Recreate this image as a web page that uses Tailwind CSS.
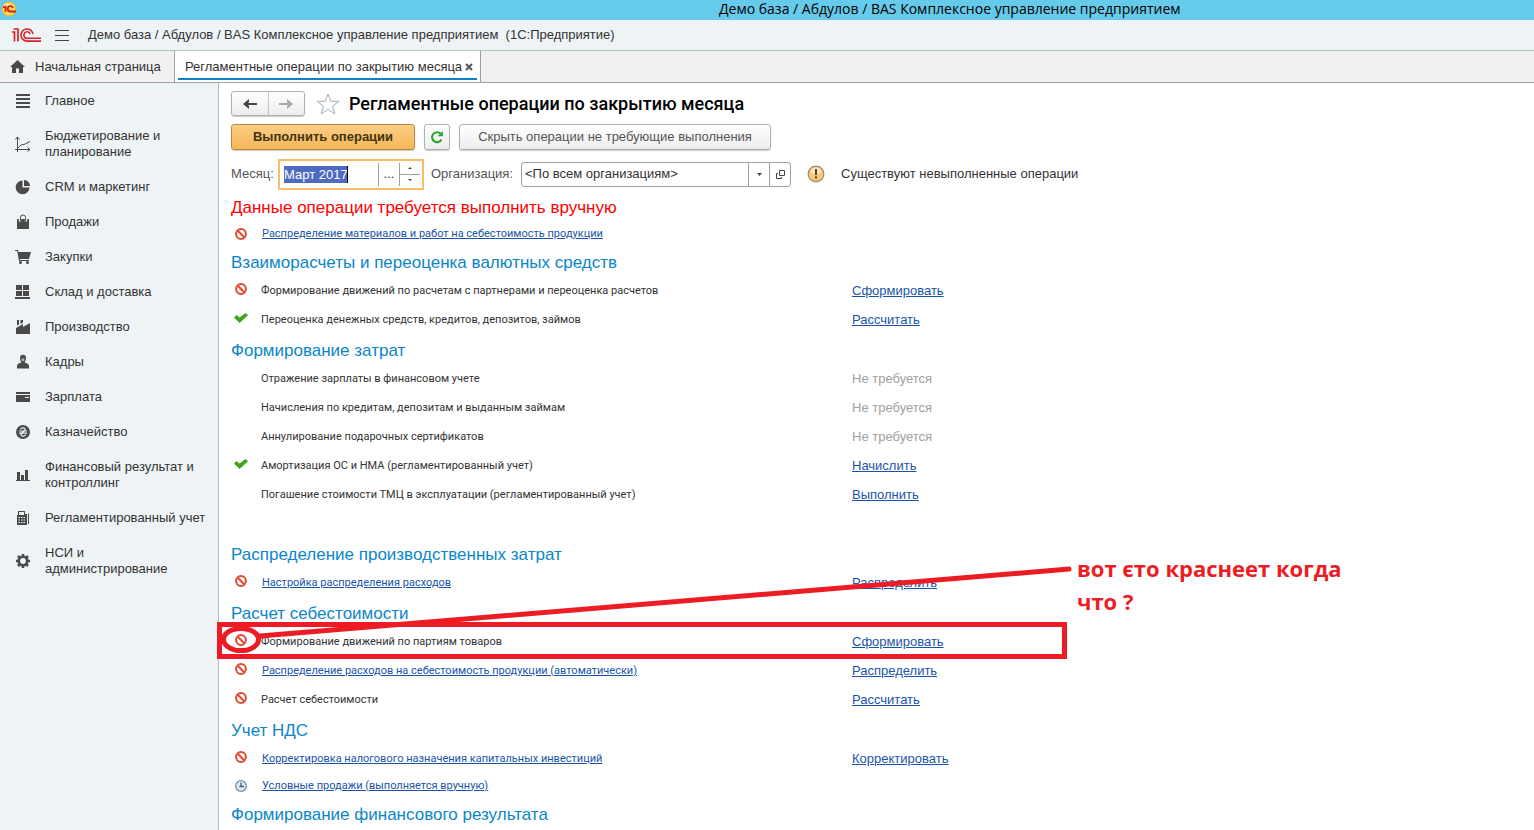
<!DOCTYPE html>
<html lang="ru">
<head>
    <meta charset="UTF-8">
    <meta name="viewport" content="width=device-width, initial-scale=1.0">
    <title>Регламентные операции по закрытию месяца</title>
    <script src="https://cdn.jsdelivr.net/npm/@tailwindcss/browser@4"></script>
</head>
<body class="relative flex min-h-screen flex-col overflow-x-hidden bg-white font-['Liberation_Sans',sans-serif] text-[13px] leading-4 text-[#333]">

    <!-- Иконки статусов -->
    <svg class="hidden">
        <symbol id="stop" viewBox="0 0 12 12">
            <circle cx="6" cy="6" r="4.9" fill="#fff" stroke="#e0492f" stroke-width="2"/>
            <path d="M2.8 2.8l6.4 6.4" stroke="#e0492f" stroke-width="2"/>
        </symbol>
        <symbol id="done" viewBox="0 0 14 12">
            <path d="M0 5.500l2.500-2.500L5.500 5.500 11.500 1 14 3.200 5.600 11z" fill="#3fa31c"/>
        </symbol>
        <symbol id="clock" viewBox="0 0 12 12">
            <circle cx="6" cy="6" r="5.300" fill="#dfe9f1" stroke="#6f8fae" stroke-width="1.300"/>
            <path d="M6 2.500V6.500H9M6 6.500H4.500" fill="none" stroke="#4b5a68" stroke-width="1.300"/>
        </symbol>
    </svg>

    <!-- Заголовок окна -->
    <div class="flex h-5 items-center bg-[#66caea] pb-[2px] text-black">
        <svg class="ml-[1px] size-4 shrink-0" viewBox="0 0 16 16">
            <circle cx="8" cy="8" r="7" fill="#fbd94d" stroke="#d8a92c" stroke-width=".8"/>
            <ellipse cx="6.500" cy="5" rx="4" ry="2.500" fill="#fff2b0"/>
            <path d="M2 6.500L4.500 5.500V11M15 10.500H9.500A2.700 2.700 0 1 1 12 7" fill="none" stroke="#dc1c10" stroke-width="1.800"/>
        </svg>
        <div class="pl-[702px] font-['Open_Sans',sans-serif] text-[14px] whitespace-nowrap">Демо база / Абдулов / BAS Комплексное управление предприятием</div>
    </div>

    <header class="flex h-[31px] items-center border-b border-[#b9bfc2] bg-[#eef3f6]">
        <svg class="ml-3 h-[14px] w-[29px] shrink-0" viewBox="0 0 29 14" fill="none" stroke="#d8232a">
            <path d="M0 4H2.500V13.500M1.500 1H6V13.500" stroke-width="1.700"/>
            <path d="M29 13.100H15A6.050 6.050 0 1 1 21 6" stroke-width="1.600"/>
            <path d="M29 10.300H15A3.250 3.250 0 1 1 18.200 6" stroke-width="1.500"/>
        </svg>
        <button type="button" aria-label="Меню" class="ml-[14px]">
            <svg class="h-3 w-[14px]" viewBox="0 0 14 12" stroke="#444"><path d="M0 1.500H14M0 6.500H14M0 11.500H14"/></svg>
        </button>
        <span class="ml-[19px] whitespace-pre">Демо база / Абдулов / BAS Комплексное управление предприятием  (1С:Предприятие)</span>
    </header>

    <div class="flex h-8 border-b border-[#a0a0a0] bg-[#f1f1f1]">
        <a href="#" class="flex w-[174px] items-center pl-[10px]">
            <svg class="h-[13px] w-[15px]" viewBox="0 0 15 13" fill="#4a4a4a"><path d="M7.500 0L15 7H13V13H9V8.500H6V13H2V7H0z"/></svg>
            <span class="ml-[10px]">Начальная страница</span>
        </a>
        <div class="flex w-[307px] border-x border-[#a0a0a0] bg-white px-[3px] pb-[2px]">
            <div class="flex flex-1 items-center justify-between border-b-2 border-[#0b82c5] pt-1 pr-1 pl-[7px]">
                <span class="whitespace-nowrap">Регламентные операции по закрытию месяца</span>
                <button type="button" aria-label="Закрыть">
                    <svg class="size-2" viewBox="0 0 8 8" stroke="#555" stroke-width="2"><path d="M1 1l6 6M7 1L1 7"/></svg>
                </button>
            </div>
        </div>
    </div>

    <div class="flex flex-1">
        <!-- Панель разделов -->
        <nav class="w-[219px] shrink-0 border-r border-[#b5bbbe] bg-[#eef3f6] pt-px">
            <a href="#" class="flex items-center gap-[14px] pt-[9px] pr-2 pb-[10px] pl-[15px]">
                <svg class="size-4 shrink-0" viewBox="0 0 16 16" fill="#4a4a4a"><path d="M1 1h14v2H1zM1 5h14v2H1zM1 9h14v2H1zM1 13h14v2H1z"/></svg>
                Главное
            </a>
            <a href="#" class="flex items-center gap-[14px] pt-[9px] pr-2 pb-[10px] pl-[15px]">
                <svg class="size-4 shrink-0" viewBox="0 0 16 16" fill="none" stroke="#4a4a4a"><path d="M2.500 16V1M0 13.500H15M.5 3.500L2.500 1l2 2.500M12.500 11.500l2.500 2-2.500 2M3 12l3-3 3-.5 6-3"/></svg>
                Бюджетирование и<br>планирование
            </a>
            <a href="#" class="flex items-center gap-[14px] pt-[9px] pr-2 pb-[10px] pl-[15px]">
                <svg class="size-4 shrink-0" viewBox="0 0 16 16" fill="#4a4a4a"><path d="M7.500 1.500V8.500H14.500A6.900 6.900 0 1 1 7.500 1.500z"/><path d="M9 1A6 6 0 0 1 15 7H9z"/></svg>
                CRM и маркетинг
            </a>
            <a href="#" class="flex items-center gap-[14px] pt-[9px] pr-2 pb-[10px] pl-[15px]">
                <svg class="size-4 shrink-0" viewBox="0 0 16 16" fill="#4a4a4a"><path d="M2 5H14V15H2z"/><path d="M5 7.500V3.500a3 3 0 0 1 6 0V7.500" fill="none" stroke="#eef3f6" stroke-width="2.400"/><path d="M5.500 7V3.500a2.500 2.500 0 0 1 5 0V7" fill="none" stroke="#4a4a4a" stroke-width="1"/></svg>
                Продажи
            </a>
            <a href="#" class="flex items-center gap-[14px] pt-[9px] pr-2 pb-[10px] pl-[15px]">
                <svg class="size-4 shrink-0" viewBox="0 0 16 16" fill="#4a4a4a"><path d="M0 1H3L3.500 3H16L14 10H5V11H14V12H4L2.200 2H0z"/><circle cx="5.500" cy="13.500" r="1.500"/><circle cx="12.500" cy="13.500" r="1.500"/></svg>
                Закупки
            </a>
            <a href="#" class="flex items-center gap-[14px] pt-[9px] pr-2 pb-[10px] pl-[15px]">
                <svg class="size-4 shrink-0" viewBox="0 0 16 16" fill="#4a4a4a"><path d="M1 1H7V6H1zM8 1H14V6H8zM1 7H7V12H1zM8 7H14V12H8zM0 13H15V15H0z"/></svg>
                Склад и доставка
            </a>
            <a href="#" class="flex items-center gap-[14px] pt-[9px] pr-2 pb-[10px] pl-[15px]">
                <svg class="size-4 shrink-0" viewBox="0 0 16 16" fill="#4a4a4a"><path d="M1 15V9L8 5V8L15 4V15zM2 1H4V5.500L2 6.500zM5.500 1H8V3.500L5.500 5z"/></svg>
                Производство
            </a>
            <a href="#" class="flex items-center gap-[14px] pt-[9px] pr-2 pb-[10px] pl-[15px]">
                <svg class="size-4 shrink-0" viewBox="0 0 16 16" fill="#4a4a4a"><path d="M5 4a3 3.300 0 0 1 6 0c0 2-1 4-1.500 4.500C12 9 14 10 14 12V14.500H2V12C2 10 4 9 6.500 8.500 6 8 5 6 5 4z"/><path d="M6.500 4.500H9.500L9 7H7z" fill="#b9bdc0"/></svg>
                Кадры
            </a>
            <a href="#" class="flex items-center gap-[14px] pt-[9px] pr-2 pb-[10px] pl-[15px]">
                <svg class="size-4 shrink-0" viewBox="0 0 16 16" fill="#4a4a4a"><path d="M1 3H15V5H1zM1 6H15V13H1z"/><path d="M10 8H14V9H10z" fill="#eef3f6"/></svg>
                Зарплата
            </a>
            <a href="#" class="flex items-center gap-[14px] pt-[9px] pr-2 pb-[10px] pl-[15px]">
                <svg class="size-4 shrink-0" viewBox="0 0 16 16"><circle cx="8" cy="8" r="7" fill="#4a4a4a"/><path d="M5.500 5.200C6.500 3 10.500 3.500 10 5.800 9.500 8 6 8 6 10.200 6 12.500 9.500 12.800 10.700 10.800M4 7H12M4 9.200H12" fill="none" stroke="#eef3f6" stroke-width="1.200"/></svg>
                Казначейство
            </a>
            <a href="#" class="flex items-center gap-[14px] pt-[9px] pr-2 pb-[10px] pl-[15px]">
                <svg class="size-4 shrink-0" viewBox="0 0 16 16" fill="#4a4a4a"><path d="M1 13H15V14H1zM2 5H5V13H2zM6 8H9V13H6zM10 3H13V13H10z"/></svg>
                Финансовый результат и<br>контроллинг
            </a>
            <a href="#" class="flex items-center gap-[14px] pt-[9px] pr-2 pb-[10px] pl-[15px]">
                <svg class="size-4 shrink-0" viewBox="0 0 16 16" fill="#4a4a4a"><path d="M3 1H10V4H12V15H2V5H3z"/><path d="M13 3.500H14V14H13z"/><path d="M4 2H9V5H4z" fill="#eef3f6"/><path d="M3.500 7.500H11M3.500 10H11M3.500 12.500H11" stroke="#eef3f6" stroke-dasharray="1.500 1"/></svg>
                Регламентированный учет
            </a>
            <a href="#" class="flex items-center gap-[14px] pt-[9px] pr-2 pb-[10px] pl-[15px]">
                <svg class="size-4 shrink-0" viewBox="0 0 16 16" fill="none" stroke="#4a4a4a"><circle cx="8" cy="8" r="4.200" stroke-width="2.600"/><path d="M8 1V3.500M8 12.500V15M1 8H3.500M12.500 8H15M3 3l1.800 1.800M11.200 11.200L13 13M13 3l-1.800 1.800M4.800 11.200L3 13" stroke-width="2.600"/></svg>
                НСИ и<br>администрирование
            </a>
        </nav>

        <main class="min-w-0 flex-1 pt-2 pl-3">
            <div class="flex h-[25px] items-center">
                <div class="flex h-[25px] w-[74px] rounded-[3px] border border-[#b0b0b0] bg-gradient-to-b from-white to-[#ededed] shadow-[0_1px_1px_#ccc]">
                    <button type="button" aria-label="Назад" class="flex flex-1 items-center justify-center border-r border-[#c4c4c4]">
                        <svg class="h-[10px] w-[14px]" viewBox="0 0 14 10"><path d="M14 5H3" stroke="#444" stroke-width="2"/><path d="M0 5L6 0V3L4 5l2 2v3z" fill="#444"/></svg>
                    </button>
                    <button type="button" aria-label="Вперед" class="flex flex-1 items-center justify-center">
                        <svg class="h-[10px] w-[14px]" viewBox="0 0 14 10"><path d="M0 5H11" stroke="#a8a8a8" stroke-width="2"/><path d="M14 5L8 0V3l2 2-2 2v3z" fill="#a8a8a8"/></svg>
                    </button>
                </div>
                <svg class="ml-[11px] h-[22px] w-6" viewBox="0 0 24 22" fill="#fff" stroke="#a5b0b8"><path d="M12 1l2.800 7.300H23l-6.500 4.900 2.400 7.800L12 16.300 5.100 21l2.400-7.800L1 8.300H9.200z"/></svg>
                <h1 class="ml-[9px] font-['Roboto',sans-serif] text-[18px] font-medium text-black">Регламентные операции по закрытию месяца</h1>
            </div>

            <div class="mt-2 flex h-[26px] gap-[9px]">
                <button type="button" class="h-[26px] w-[184px] rounded-[3px] border border-[#b98a3e] bg-gradient-to-b from-[#fccd85] to-[#f5b758] font-bold text-[#40350f] shadow-[0_1px_1px_#ccc]">Выполнить операции</button>
                <button type="button" aria-label="Обновить" class="flex h-[26px] w-[26px] items-center justify-center rounded-[3px] border border-[#b0b0b0] bg-gradient-to-b from-white to-[#ededed] shadow-[0_1px_1px_#ccc]">
                    <svg class="size-[14px]" viewBox="0 0 14 14"><path d="M11.500 9.500A5 5 0 1 1 10.500 3.500" fill="none" stroke="#29a329" stroke-width="2"/><path d="M12.800 1V6.200H7.600z" fill="#29a329"/></svg>
                </button>
                <button type="button" class="h-[26px] w-[312px] rounded-[3px] border border-[#b0b0b0] bg-gradient-to-b from-white to-[#ededed] text-[#555] shadow-[0_1px_1px_#ccc]">Скрыть операции не требующие выполнения</button>
            </div>

            <div class="mt-2 flex h-8 items-center">
                <label for="month" class="w-[47px] text-[#555]">Месяц:</label>
                <div class="flex h-[31px] w-[146px] items-center border-2 border-[#f9bd68] bg-white">
                    <div class="flex flex-1 items-center pl-1">
                        <input id="month" type="text" value="Март 2017" class="h-[17px] w-[64px] border-r border-black bg-[#4f6bc0] text-white outline-none">
                    </div>
                    <button type="button" aria-label="Выбрать" class="h-[23px] w-[22px] border-x border-[#a0a0a0]">...</button>
                    <div class="mr-[2px] flex h-[23px] w-5 flex-col">
                        <button type="button" aria-label="Больше" class="flex flex-1 items-center justify-center border-b border-[#a0a0a0]"><svg class="h-[2px] w-1" viewBox="0 0 4 2" fill="#444"><path d="M0 2L2 0l2 2z"/></svg></button>
                        <button type="button" aria-label="Меньше" class="flex flex-1 items-center justify-center"><svg class="h-[2px] w-1" viewBox="0 0 4 2" fill="#444"><path d="M0 0L2 2l2-2z"/></svg></button>
                    </div>
                </div>
                <label for="org" class="ml-[7px] w-[90px] text-[#555]">Организация:</label>
                <div class="flex h-[25px] w-[270px] items-stretch rounded-[3px] border border-[#a0a0a0] bg-white">
                    <input id="org" type="text" value="&lt;По всем организациям&gt;" class="min-w-0 flex-1 pl-[3px] outline-none">
                    <button type="button" aria-label="Список" class="flex w-[21px] items-center justify-center border-l border-[#a0a0a0]"><svg class="h-[3px] w-[5px]" viewBox="0 0 5 3" fill="#444"><path d="M0 0H5L2.500 3z"/></svg></button>
                    <button type="button" aria-label="Открыть" class="flex w-[21px] items-center justify-center border-l border-[#a0a0a0]"><svg class="size-[9px]" viewBox="0 0 9 9" fill="none" stroke="#444"><path d="M3.500.5H8.500V5.500H3.500zM2 3.500H.5V8.500H5.500V7"/></svg></button>
                </div>
                <svg class="ml-4 size-[18px]" viewBox="0 0 18 18"><circle cx="9" cy="9" r="7.800" fill="#f9c879" stroke="#9c8c74" stroke-width="1.200"/><ellipse cx="9" cy="6" rx="5.500" ry="3.500" fill="#fde6bd"/><path d="M8 4H10V10H8zM8 11.500H10V13.500H8z" fill="#54452f"/></svg>
                <span class="ml-4 whitespace-nowrap">Существуют невыполненные операции</span>
            </div>

            <!-- Этапы закрытия месяца -->
            <section class="pt-px font-['Roboto',sans-serif] text-[11px]">
                <h2 class="flex h-[30px] items-center pt-[3px] font-['Liberation_Sans',sans-serif] text-[17px] text-[#f00]">Данные операции требуется выполнить вручную</h2>
                <div class="grid h-[25px] grid-cols-[30px_591px_auto] items-center">
                    <svg class="ml-1 size-3"><use href="#stop"/></svg>
                    <a href="#" class="justify-self-start pl-px text-[#1a54a8] underline">Распределение материалов и работ на себестоимость продукции</a>
                </div>
            </section>

            <section class="font-['Roboto',sans-serif] text-[11px]">
                <h2 class="flex h-[30px] items-center pt-[3px] font-['Liberation_Sans',sans-serif] text-[17px] text-[#0b86c9]">Взаиморасчеты и переоценка валютных средств</h2>
                <div class="grid h-[29px] grid-cols-[30px_591px_auto] items-center">
                    <svg class="mb-1 ml-1 size-3"><use href="#stop"/></svg>
                    <span>Формирование движений по расчетам с партнерами и переоценка расчетов</span>
                    <a href="#" class="justify-self-start font-['Liberation_Sans',sans-serif] text-[13px] text-[#1a54a8] underline">Сформировать</a>
                </div>
                <div class="grid h-[29px] grid-cols-[30px_591px_auto] items-center">
                    <svg class="mb-1 ml-[3px] h-3 w-[14px]"><use href="#done"/></svg>
                    <span>Переоценка денежных средств, кредитов, депозитов, займов</span>
                    <a href="#" class="justify-self-start font-['Liberation_Sans',sans-serif] text-[13px] text-[#1a54a8] underline">Рассчитать</a>
                </div>
            </section>

            <section class="mb-[29px] font-['Roboto',sans-serif] text-[11px]">
                <h2 class="flex h-[30px] items-center pt-[3px] font-['Liberation_Sans',sans-serif] text-[17px] text-[#0b86c9]">Формирование затрат</h2>
                <div class="grid h-[29px] grid-cols-[30px_591px_auto] items-center">
                    <span class="col-start-2">Отражение зарплаты в финансовом учете</span>
                    <span class="font-['Liberation_Sans',sans-serif] text-[13px] text-[#a0a0a0]">Не требуется</span>
                </div>
                <div class="grid h-[29px] grid-cols-[30px_591px_auto] items-center">
                    <span class="col-start-2">Начисления по кредитам, депозитам и выданным займам</span>
                    <span class="font-['Liberation_Sans',sans-serif] text-[13px] text-[#a0a0a0]">Не требуется</span>
                </div>
                <div class="grid h-[29px] grid-cols-[30px_591px_auto] items-center">
                    <span class="col-start-2">Аннулирование подарочных сертификатов</span>
                    <span class="font-['Liberation_Sans',sans-serif] text-[13px] text-[#a0a0a0]">Не требуется</span>
                </div>
                <div class="grid h-[29px] grid-cols-[30px_591px_auto] items-center">
                    <svg class="mb-1 ml-[3px] h-3 w-[14px]"><use href="#done"/></svg>
                    <span>Амортизация ОС и НМА (регламентированный учет)</span>
                    <a href="#" class="justify-self-start font-['Liberation_Sans',sans-serif] text-[13px] text-[#1a54a8] underline">Начислить</a>
                </div>
                <div class="grid h-[29px] grid-cols-[30px_591px_auto] items-center">
                    <span class="col-start-2">Погашение стоимости ТМЦ в эксплуатации (регламентированный учет)</span>
                    <a href="#" class="justify-self-start font-['Liberation_Sans',sans-serif] text-[13px] text-[#1a54a8] underline">Выполнить</a>
                </div>
            </section>

            <section class="font-['Roboto',sans-serif] text-[11px]">
                <h2 class="flex h-[30px] items-center pt-[3px] font-['Liberation_Sans',sans-serif] text-[17px] text-[#0b86c9]">Распределение производственных затрат</h2>
                <div class="grid h-[29px] grid-cols-[30px_591px_auto] items-center">
                    <svg class="mb-1 ml-1 size-3"><use href="#stop"/></svg>
                    <a href="#" class="justify-self-start pl-px text-[#1a54a8] underline">Настройка распределения расходов</a>
                    <a href="#" class="justify-self-start font-['Liberation_Sans',sans-serif] text-[13px] text-[#1a54a8] underline">Распределить</a>
                </div>
            </section>

            <section class="font-['Roboto',sans-serif] text-[11px]">
                <h2 class="flex h-[30px] items-center pt-[3px] font-['Liberation_Sans',sans-serif] text-[17px] text-[#0b86c9]">Расчет себестоимости</h2>
                <div class="grid h-[29px] grid-cols-[30px_591px_auto] items-center">
                    <svg class="mb-1 ml-1 size-3"><use href="#stop"/></svg>
                    <span>Формирование движений по партиям товаров</span>
                    <a href="#" class="justify-self-start font-['Liberation_Sans',sans-serif] text-[13px] text-[#1a54a8] underline">Сформировать</a>
                </div>
                <div class="grid h-[29px] grid-cols-[30px_591px_auto] items-center">
                    <svg class="mb-1 ml-1 size-3"><use href="#stop"/></svg>
                    <a href="#" class="justify-self-start pl-px text-[#1a54a8] underline">Распределение расходов на себестоимость продукции (автоматически)</a>
                    <a href="#" class="justify-self-start font-['Liberation_Sans',sans-serif] text-[13px] text-[#1a54a8] underline">Распределить</a>
                </div>
                <div class="grid h-[29px] grid-cols-[30px_591px_auto] items-center">
                    <svg class="mb-1 ml-1 size-3"><use href="#stop"/></svg>
                    <span>Расчет себестоимости</span>
                    <a href="#" class="justify-self-start font-['Liberation_Sans',sans-serif] text-[13px] text-[#1a54a8] underline">Рассчитать</a>
                </div>
            </section>

            <section class="font-['Roboto',sans-serif] text-[11px]">
                <h2 class="flex h-[30px] items-center pt-[3px] font-['Liberation_Sans',sans-serif] text-[17px] text-[#0b86c9]">Учет НДС</h2>
                <div class="grid h-[29px] grid-cols-[30px_591px_auto] items-center">
                    <svg class="mb-1 ml-1 size-3"><use href="#stop"/></svg>
                    <a href="#" class="justify-self-start pl-px text-[#1a54a8] underline">Корректировка налогового назначения капитальных инвестиций</a>
                    <a href="#" class="justify-self-start font-['Liberation_Sans',sans-serif] text-[13px] text-[#1a54a8] underline">Корректировать</a>
                </div>
                <div class="grid h-[25px] grid-cols-[30px_591px_auto] items-center">
                    <svg class="ml-1 size-3"><use href="#clock"/></svg>
                    <a href="#" class="justify-self-start pl-px text-[#1a54a8] underline">Условные продажи (выполняется вручную)</a>
                </div>
            </section>

            <section>
                <h2 class="flex h-[30px] items-center pt-[3px] text-[17px] text-[#0b86c9]">Формирование финансового результата</h2>
            </section>
        </main>
    </div>

    <!-- Пометки поверх окна -->
    <svg class="pointer-events-none absolute top-[560px] left-[210px] h-[110px] w-[870px]" viewBox="210 560 870 110" fill="none" stroke="#ed1c24" stroke-width="5">
        <path d="M219.500 624.500H1064.500V656.500H219.500z"/>
        <ellipse cx="241" cy="639.500" rx="17.500" ry="11"/>
        <path d="M260 636L1069 569" stroke-linecap="round"/>
    </svg>
    <p class="absolute top-[552px] left-[1077px] w-[300px] font-['Open_Sans',sans-serif] text-[22px] leading-[33px] font-bold text-[#ed1c24]">вот єто краснеет когда<br>что ?</p>
</body>
</html>
